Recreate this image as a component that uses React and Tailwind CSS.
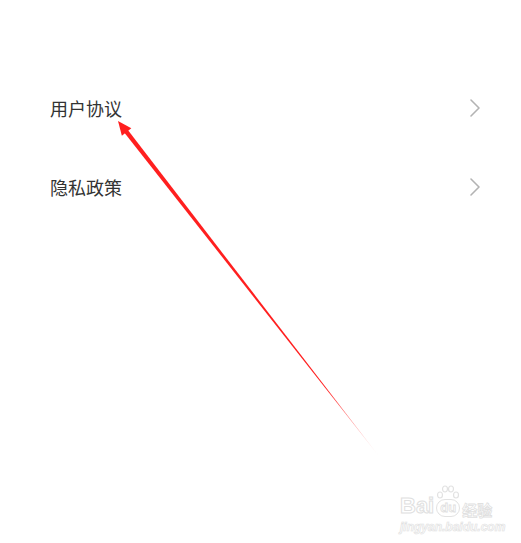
import React from "react";

function Chevron() {
  return (
    <svg width="12" height="20" viewBox="0 0 12 20" className="block">
      <path d="M2 2 L10 10 L2 18" fill="none" stroke="#b3b3b3" strokeWidth="1.6" strokeLinecap="round" strokeLinejoin="round" />
    </svg>
  );
}

function Row({ label }) {
  return (
    <div className="flex h-[79px] items-center justify-between pl-[50px] pr-[40px]">
      <span className="text-[18px] leading-none text-[#333333] [font-family:'Noto_Sans_CJK_SC','Noto_Sans',sans-serif]">{label}</span>
      <Chevron />
    </div>
  );
}

function Arrow() {
  // tip (118,121) tail (378,455)
  const tx = 118, ty = 121, ex = 378, ey = 455;
  const dx = ex - tx, dy = ey - ty;
  const L = Math.hypot(dx, dy);
  const ux = dx / L, uy = dy / L;
  const px = uy, py = -ux;
  const hl = 14, hw = 6;
  const bx = tx + ux * hl, by = ty + uy * hl;
  const head = `${tx},${ty} ${bx + px * hw},${by + py * hw} ${bx - px * hw},${by - py * hw}`;
  const sw = 2.2;
  const sx = tx + ux * (hl - 2), sy = ty + uy * (hl - 2);
  const shaft = `${sx + px * sw},${sy + py * sw} ${ex},${ey} ${sx - px * sw},${sy - py * sw}`;
  return (
    <svg className="pointer-events-none absolute left-0 top-0" width="521" height="543" viewBox="0 0 521 543">
      <defs>
        <linearGradient id="fade" gradientUnits="userSpaceOnUse" x1={tx} y1={ty} x2={ex} y2={ey}>
          <stop offset="0" stopColor="#ff1f1f" stopOpacity="1" />
          <stop offset="0.8" stopColor="#ff1f1f" stopOpacity="1" />
          <stop offset="1" stopColor="#ff1f1f" stopOpacity="0.1" />
        </linearGradient>
      </defs>
      <polygon points={shaft} fill="url(#fade)" />
      <polygon points={head} fill="#ff1f1f" />
    </svg>
  );
}

function Watermark() {
  return (
    <div className="pointer-events-none absolute left-[400px] top-[485px] flex w-[95px] flex-col items-start">
      <div className="relative flex h-[32px] items-end">
        <svg className="absolute left-[36px] top-0" width="24" height="18" viewBox="0 0 24 18">
          <g fill="none" stroke="#e2e2e2" strokeWidth="1.2">
            <ellipse cx="4" cy="10" rx="2.5" ry="3" />
            <ellipse cx="9" cy="4" rx="2.5" ry="3" />
            <ellipse cx="15" cy="4" rx="2.5" ry="3" />
            <ellipse cx="20" cy="10" rx="2.5" ry="3" />
          </g>
        </svg>
        <span className="text-[22px] font-bold leading-none text-white [-webkit-text-stroke:1px_#e0e0e0] [font-family:'Liberation_Sans',sans-serif]">Bai</span>
        <span className="ml-[2px] rounded-full border border-[#e2e2e2] px-[3px] text-[13px] font-bold leading-[16px] text-white [-webkit-text-stroke:0.8px_#e0e0e0] [font-family:'Liberation_Sans',sans-serif]">du</span>
        <span className="ml-[2px] text-[15px] font-bold leading-none text-white [-webkit-text-stroke:0.8px_#e0e0e0] [font-family:'Noto_Sans_CJK_SC',sans-serif]">经验</span>
      </div>
      <span className="mt-[4px] text-[12px] font-bold italic leading-none text-white [-webkit-text-stroke:0.7px_#e2e2e2] [font-family:'Liberation_Sans',sans-serif]">jingyan.baidu.com</span>
    </div>
  );
}

export default function App() {
  return (
    <div className="relative h-[543px] w-[521px] overflow-hidden bg-white">
      <div className="flex flex-col pt-[68px]">
        <Row label="用户协议" />
        <Row label="隐私政策" />
      </div>
      <Arrow />
      <Watermark />
    </div>
  );
}
